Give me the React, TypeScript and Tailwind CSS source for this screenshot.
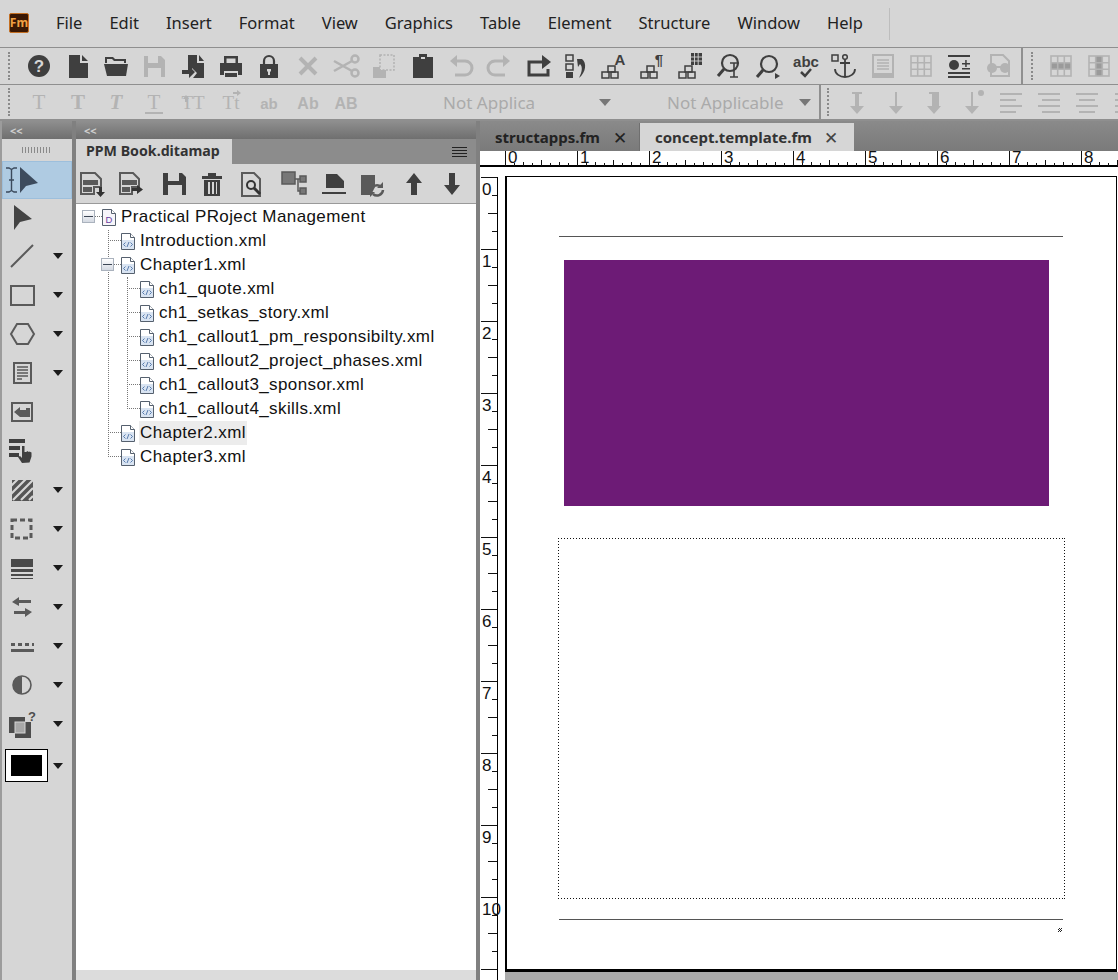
import React from 'react';

const DARK = '#3f3f3f';
const MID = '#5a5a5a';
const OFF = '#b3b3b3';
const UI = { fontFamily: '"Noto Sans", "Open Sans", sans-serif' };

const Ico: React.FC<{ children: React.ReactNode; c?: string; size?: number }> = ({ children, c = DARK, size = 28 }) => (
  <svg viewBox="0 0 28 28" width={size} height={size} fill={c} stroke="none" className="shrink-0">
    {children}
  </svg>
);

const Caret = () => (
  <svg viewBox="0 0 10 6" width={10} height={6} className="shrink-0">
    <path d="M0 0h10L5 6z" fill="#1a1a1a" />
  </svg>
);

const GrayCaret = () => (
  <svg viewBox="0 0 12 7" width={12} height={7} className="shrink-0">
    <path d="M0 0h12L6 7z" fill="#777" />
  </svg>
);

const Stacked = ({ children }: { children: React.ReactNode }) => (
  <Ico>
    <g fill="none" stroke={DARK} strokeWidth="1.500">
      <rect x="8" y="14" width="7" height="6" />
      <rect x="2" y="20" width="7" height="6" />
      <rect x="11" y="20" width="7" height="6" />
    </g>
    {children}
  </Ico>
);

const GridIcon = ({ c = OFF, fillRows = false, fillCol = false }: { c?: string; fillRows?: boolean; fillCol?: boolean }) => (
  <Ico c={c}>
    {fillRows && <rect x="4" y="10" width="20" height="8" fill="#9a9a9a" />}
    {fillCol && <rect x="11" y="4" width="7" height="20" fill="#9a9a9a" />}
    <g fill="none" stroke={c} strokeWidth="1.600">
      <rect x="4" y="4" width="20" height="20" />
      <path d="M10.700 4v20M17.300 4v20M4 10.700h20M4 17.300h20" />
    </g>
  </Ico>
);

const toolbarOne: React.ReactNode[] = [
  <Ico key="help">
    <circle cx="14" cy="14" r="11" />
    <text x="14" y="20" textAnchor="middle" fontSize="17" fontWeight="700" fill="#d6d6d6" fontFamily="Liberation Sans, sans-serif">?</text>
  </Ico>,
  <Ico key="new"><path d="M5 3h11v8h8v15H5zM18 3l6 6h-6z" /></Ico>,
  <Ico key="open">
    <path d="M3 11V5h8l2 2h11v4h-2V9H12l-2-2H5v4z" />
    <path d="M2 12h24l-2 12H5z" />
  </Ico>,
  <Ico key="save" c={OFF}>
    <path fillRule="evenodd" d="M4 4h17l4 4v17H4zM8 4v7h10V4zM8 16v9h13v-9z" />
  </Ico>,
  <Ico key="import">
    <path d="M9 3h9v8h7v15H14l4-5-5-5v3H9zM20 3l5 6h-5z" />
    <path d="M3 18h7v-4l6 6-6 6v-4H3z" />
  </Ico>,
  <Ico key="print">
    <path fillRule="evenodd" d="M7 4h14v7h4v12h-4v-4H7v4H3V11h4zM9.500 6.500V11h9V6.500z" />
    <rect x="8" y="21" width="12" height="4" />
  </Ico>,
  <Ico key="lock">
    <path d="M9 13V9a5 5 0 0 1 10 0v4" fill="none" stroke={DARK} strokeWidth="2.200" />
    <path fillRule="evenodd" d="M5 12h18v14H5zM12 17v2l1 1v3h2v-3l1-1v-2z" />
  </Ico>,
  <Ico key="cut" c={OFF}>
    <path d="M6 6l16 16M22 6L6 22" stroke={OFF} strokeWidth="4" fill="none" />
  </Ico>,
  <Ico key="scissors" c={OFF}>
    <g fill="none" stroke={OFF} strokeWidth="2.500">
      <circle cx="23" cy="7" r="3.500" />
      <circle cx="23" cy="21" r="3.500" />
      <path d="M20 9L2 19M20 19L2 9" />
    </g>
  </Ico>,
  <Ico key="copy" c={OFF}>
    <rect x="10" y="3" width="14" height="15" fill="none" stroke={OFF} strokeWidth="1.500" strokeDasharray="2 1.500" />
    <path d="M3 15h7v8h6v3H3z" />
    <rect x="10" y="18" width="6" height="5" />
  </Ico>,
  <Ico key="paste">
    <path d="M4 5h6V2h8v3h6v21H4z" />
    <rect x="12" y="5" width="4" height="2" fill="#d6d6d6" />
  </Ico>,
  <Ico key="undo" c={OFF}>
    <path d="M9 9h9a5.500 5.500 0 0 1 0 14H8" fill="none" stroke={OFF} strokeWidth="3" />
    <path d="M10 3v12L3 9z" />
  </Ico>,
  <Ico key="redo" c={OFF}>
    <path d="M19 9h-9a5.500 5.500 0 0 0 0 14h10" fill="none" stroke={OFF} strokeWidth="3" />
    <path d="M18 3v12l7-6z" />
  </Ico>,
  <Ico key="share">
    <path d="M20 10H5v13h19v-6" fill="none" stroke={DARK} strokeWidth="3" />
    <path d="M18 3l9 7-9 7z" />
  </Ico>,
  <Ico key="list">
    <rect x="4" y="3" width="7" height="6" fill="none" stroke={DARK} strokeWidth="1.500" />
    <rect x="4" y="12" width="7" height="6" fill="none" stroke={DARK} strokeWidth="1.500" />
    <rect x="4" y="20" width="7" height="6" />
    <path d="M15 7h5c5 4 4 13-3 19 3-6 4-11 1-14l-2 3z" />
  </Ico>,
  <Stacked key="a">
    <text x="20" y="13" textAnchor="middle" fontSize="15" fontWeight="700" fill={DARK} fontFamily="Liberation Sans, sans-serif">A</text>
  </Stacked>,
  <Stacked key="pilcrow">
    <text x="20" y="13" textAnchor="middle" fontSize="15" fontWeight="700" fill={DARK} fontFamily="Liberation Sans, sans-serif">¶</text>
  </Stacked>,
  <Stacked key="grid">
    <path d="M14 1h11v12H14z" />
    <path d="M17.500 1v12M21.200 1v12M14 5h11M14 9h11" stroke="#d6d6d6" strokeWidth="0.900" />
  </Stacked>,
  <Ico key="findg">
    <circle cx="15" cy="11" r="8" fill="none" stroke={DARK} strokeWidth="2.200" />
    <path d="M15 11h8M19 11v14M15 25h8" fill="none" stroke={DARK} strokeWidth="1.600" />
    <path d="M9 17l-6 7" stroke={DARK} strokeWidth="3" />
  </Ico>,
  <Ico key="find">
    <circle cx="15" cy="12" r="8" fill="none" stroke={DARK} strokeWidth="2.200" />
    <path d="M9 18l-6 7" stroke={DARK} strokeWidth="3" />
    <path d="M21 21l5 3-5 3z" />
  </Ico>,
  <Ico key="spell">
    <text x="14" y="15" textAnchor="middle" fontSize="15" fontWeight="700" fill={DARK} fontFamily="Liberation Sans, sans-serif">abc</text>
    <path d="M9 20l4 4 6-7" fill="none" stroke={DARK} strokeWidth="2.500" />
  </Ico>,
  <Ico key="anchor">
    <rect x="2" y="3" width="6" height="6" fill="none" stroke={DARK} strokeWidth="1.500" />
    <circle cx="15" cy="5" r="2.300" fill="none" stroke={DARK} strokeWidth="1.500" />
    <path d="M15 7v18M10 11h10M5 17c0 5 5 8 10 8s10-3 10-8" fill="none" stroke={DARK} strokeWidth="1.800" />
  </Ico>,
  <Ico key="page" c={OFF}>
    <rect x="4" y="3" width="20" height="19" fill="none" stroke={OFF} strokeWidth="2" />
    <path d="M8 8h12M8 11h12M8 14h12M8 17h12" stroke={OFF} strokeWidth="1.500" />
    <rect x="3" y="23" width="22" height="3" />
  </Ico>,
  <GridIcon key="table" />,
  <Ico key="bullet">
    <path d="M3 3h22v2H3z" />
    <circle cx="9" cy="13" r="5" />
    <path d="M17 11h8v1.500h-8zM20.200 8h1.500v7h-1.500zM17 16h8v1.500h-8zM3 20h22v2H3zM3 24h22v2H3z" />
  </Ico>,
  <Ico key="glasses" c={OFF}>
    <path d="M7 3h12l6 6v15H7z" fill="none" stroke={OFF} strokeWidth="2" />
    <circle cx="8" cy="16" r="5" />
    <circle cx="21" cy="16" r="5" />
    <rect x="10" y="14" width="8" height="2" />
  </Ico>,
];

const FmtText = ({ children, serif = true, bold = false, italic = false, size = 21 }: { children: React.ReactNode; serif?: boolean; bold?: boolean; italic?: boolean; size?: number }) => (
  <text
    x="14"
    y="21"
    textAnchor="middle"
    fontSize={size}
    fontWeight={bold ? 700 : 400}
    fontStyle={italic ? 'italic' : 'normal'}
    fill={OFF}
    fontFamily={serif ? 'Liberation Serif, serif' : 'Liberation Sans, sans-serif'}
  >
    {children}
  </text>
);

const toolbarTwo: React.ReactNode[] = [
  <Ico key="t1"><FmtText>T</FmtText></Ico>,
  <Ico key="t2"><FmtText bold>T</FmtText></Ico>,
  <Ico key="t3"><FmtText italic bold>T</FmtText></Ico>,
  <Ico key="t4"><FmtText>T</FmtText><rect x="5" y="24" width="18" height="2" fill={OFF} /></Ico>,
  <Ico key="t5">
    <FmtText size={19}>TT</FmtText>
    <path d="M7 7l-3 4h2v3h2v-3h2z" fill={OFF} />
  </Ico>,
  <Ico key="t6">
    <FmtText size={19}>Tt</FmtText>
    <path d="M20 2l4 3-4 3zM16 4h5v2h-5z" fill={OFF} />
  </Ico>,
  <Ico key="t7"><FmtText serif={false} bold size={15}>ab</FmtText></Ico>,
  <Ico key="t8"><FmtText serif={false} bold size={16}>Ab</FmtText></Ico>,
  <Ico key="t9"><FmtText serif={false} bold size={16}>AB</FmtText></Ico>,
];

const spacingIcons: React.ReactNode[] = [
  <Ico key="d1" c={OFF}><path d="M9 4h10v2h-3v12h5l-7 8-7-8h5V6H9z" /></Ico>,
  <Ico key="d2" c={OFF}><path d="M13 4h2v14h6l-7 8-7-8h6z" /></Ico>,
  <Ico key="d3" c={OFF}><path d="M9 4h10v14h2l-7 8-7-8h5V6H9z" /></Ico>,
  <Ico key="d4" c={OFF}><circle cx="23" cy="5" r="3" /><path d="M13 4h2v14h6l-7 8-7-8h6z" /></Ico>,
  <Ico key="a1" c={OFF}><path d="M3 5h22v2H3zM3 11h16v2H3zM3 17h22v2H3zM3 23h16v2H3z" /></Ico>,
  <Ico key="a2" c={OFF}><path d="M3 5h22v2H3zM7 11h18v2H7zM3 17h22v2H3zM7 23h18v2H7z" /></Ico>,
  <Ico key="a3" c={OFF}><path d="M3 5h22v2H3zM6 11h16v2H6zM3 17h22v2H3zM6 23h16v2H6z" /></Ico>,
  <Ico key="a4" c={OFF}><path d="M3 5h22v2H3zM3 11h22v2H3zM3 17h22v2H3zM3 23h22v2H3z" /></Ico>,
];

const tools: { icon: React.ReactNode; caret?: boolean; active?: boolean }[] = [
  {
    active: true,
    icon: (
      <svg viewBox="0 0 36 28" width={36} height={28} className="ml-[-5px] shrink-0">
        <path d="M3 2h3l2.500 1.500L11 2h3M3 26h3l2.500-1.500L11 26h3M8.500 3v21M6 14h5" fill="none" stroke="#3b4a5c" strokeWidth="1.400" />
        <path d="M17 1v26l6-7 12-3z" fill="#3d4b5d" />
      </svg>
    ),
  },
  { icon: <Ico><path d="M6 1v25l6-8 12-3z" fill="#444" /></Ico> },
  { caret: true, icon: <Ico><path d="M3 25L25 3" stroke={MID} strokeWidth="2" /></Ico> },
  { caret: true, icon: <Ico><rect x="3" y="5" width="23" height="19" fill="none" stroke={MID} strokeWidth="2" /></Ico> },
  { caret: true, icon: <Ico><path d="M9 4h11l6 10-6 10H9L3 14z" fill="none" stroke={MID} strokeWidth="2" /></Ico> },
  {
    caret: true,
    icon: (
      <Ico>
        <rect x="6" y="4" width="17" height="20" fill="none" stroke={MID} strokeWidth="2" />
        <path d="M9 8h11M9 11h11M9 14h11M9 17h11M9 20h5" stroke={MID} strokeWidth="1.300" />
      </Ico>
    ),
  },
  {
    icon: (
      <Ico>
        <rect x="4" y="5" width="20" height="18" fill="none" stroke={MID} strokeWidth="2" />
        <path d="M6 14l6-5v3h6v-2h4v9H12z" fill={MID} />
      </Ico>
    ),
  },
  {
    icon: (
      <svg viewBox="0 0 26 26" width={26} height={26} className="ml-[1px] shrink-0">
        <path d="M0 1h16v4H0zM0 8h11v4H0zM0 15h10v4H0z" fill="#3f3f3f" />
        <path d="M13 25l-4-6 2-1 2 2V8h2.500v6l2 0 .5-1 2 1 .5-.5 2 1v4l-2 6z" fill="#3f3f3f" />
      </svg>
    ),
  },
  {
    caret: true,
    icon: (
      <Ico>
        <rect x="4" y="4" width="21" height="21" fill="#555" />
        <path d="M2 11L11 2M2 19L19 2M5 24L25 4M13 24L25 12M21 24l4-4" stroke="#d6d6d6" strokeWidth="2.200" />
      </Ico>
    ),
  },
  {
    caret: true,
    icon: <Ico><rect x="4" y="5" width="19" height="18" fill="none" stroke={MID} strokeWidth="3" strokeDasharray="5 3" /></Ico>,
  },
  {
    caret: true,
    icon: <Ico><path d="M3 5h22v8H3zM3 15h22v3H3zM3 20h22v2H3zM3 24h22v1H3z" fill="#4a4a4a" /></Ico>,
  },
  {
    caret: true,
    icon: (
      <Ico>
        <path d="M4 9l7-5v3h12v3H11v3zM24 19l-7 5v-3H6v-3h11v-3z" fill={MID} />
      </Ico>
    ),
  },
  {
    caret: true,
    icon: <Ico><path d="M3 11h4v3H3zM10 11h4v3h-4zM17 11h4v3h-4zM24 11h2v3h-2zM3 17h23v3H3z" fill={MID} /></Ico>,
  },
  {
    caret: true,
    icon: (
      <Ico>
        <circle cx="14" cy="14" r="9" fill="none" stroke={MID} strokeWidth="1.600" />
        <path d="M14 5a9 9 0 0 0 0 18z" fill={MID} />
      </Ico>
    ),
  },
  {
    caret: true,
    icon: (
      <Ico>
        <rect x="1" y="7" width="16" height="16" fill="#4d4d4d" />
        <rect x="7" y="12" width="16" height="16" fill="#4d4d4d" />
        <rect x="7" y="12" width="10" height="11" fill="#a8a8a8" stroke="#d6d6d6" />
        <text x="24" y="11" textAnchor="middle" fontSize="13" fontWeight="700" fill="#4d4d4d" fontFamily="Liberation Sans, sans-serif">?</text>
      </Ico>
    ),
  },
];

const panelIcons: { cls: string; icon: React.ReactNode }[] = [
  {
    cls: 'ml-[2px]',
    icon: (
      <Ico c={MID}>
        <path d="M3 3h14l6 6v8h-7v7H3z" fill="none" stroke={MID} strokeWidth="2" />
        <path d="M5 10h15v5H5zM5 17h9v5H5z" />
        <path d="M21 17h3v5h3l-4.500 5-4.500-5h3z" fill="#333" />
      </Ico>
    ),
  },
  {
    cls: 'ml-[10px]',
    icon: (
      <Ico c={MID}>
        <path d="M4 3h13l6 6v8h-7v7H4z" fill="none" stroke={MID} strokeWidth="2" />
        <path d="M6 10h15v5H6zM6 17h8v5H6z" />
        <path d="M16 18h5v-3l6 4.500-6 4.500v-3h-5z" fill="#333" />
      </Ico>
    ),
  },
  {
    cls: 'ml-[16px]',
    icon: <Ico><path fillRule="evenodd" d="M3 3h19l4 4v18H3zM8 3v8h11V3zM8 15v10h14V15z" /></Ico>,
  },
  {
    cls: 'ml-[10px]',
    icon: (
      <Ico>
        <path d="M10 3h8v3h6v3H4V6h6z" />
        <path fillRule="evenodd" d="M6 10h16v16H6zM10 12v12h2V12zM14 12v12h2V12zM18 12v12h1V12z" />
      </Ico>
    ),
  },
  {
    cls: 'ml-[11px]',
    icon: (
      <Ico c={MID}>
        <path d="M5 3h12l6 6v17H5z" fill="none" stroke={MID} strokeWidth="2" />
        <circle cx="14" cy="15" r="4" fill="none" stroke="#333" strokeWidth="2" />
        <path d="M17 18l6 6" stroke="#333" strokeWidth="3" />
      </Ico>
    ),
  },
  {
    cls: 'ml-[15px]',
    icon: (
      <Ico c={MID}>
        <rect x="2" y="2" width="13" height="12" fill="#777" stroke={MID} strokeWidth="1.500" />
        <rect x="20" y="6" width="6" height="6" fill="#777" stroke={MID} strokeWidth="1.500" />
        <rect x="20" y="18" width="6" height="6" fill="#777" stroke={MID} strokeWidth="1.500" />
        <path d="M15 9h5M18 9v12h2" fill="none" stroke={MID} strokeWidth="1.500" />
      </Ico>
    ),
  },
  {
    cls: 'ml-[11px]',
    icon: <Ico><path d="M7 4h11l7 7v7H7zM3 22h24v2H3z" /></Ico>,
  },
  {
    cls: 'ml-[10px]',
    icon: (
      <Ico c={MID}>
        <path d="M4 5h14v12l-4 8H4z" />
        <path d="M14 20a6 6 0 0 1 10-3M26 20a6 6 0 0 1-10 4" fill="none" stroke={MID} strokeWidth="2.500" />
        <path d="M26 12v6h-6zM13 27v-5h5z" />
      </Ico>
    ),
  },
  { cls: 'ml-[15px]', icon: <Ico><path d="M14 3l8 10h-5v12h-6V13H6z" /></Ico> },
  { cls: 'ml-[10px]', icon: <Ico><path d="M14 25l8-10h-5V3h-6v12H6z" /></Ico> },
];

const Grip = () => <div className="h-[28px] w-0 shrink-0 border-l-2 border-dotted border-[#8a8a8a]" />;

const Cell = ({ children }: { children: React.ReactNode }) => (
  <div className="flex w-[38.350px] shrink-0 justify-center">{children}</div>
);

const MENU = ['File', 'Edit', 'Insert', 'Format', 'View', 'Graphics', 'Table', 'Element', 'Structure', 'Window', 'Help'];

const FileIcon = ({ root = false }: { root?: boolean }) => (
  <svg viewBox="0 0 14 17" width={14} height={17} className="shrink-0">
    <path d="M.5.5h9l4 4v12H.5z" fill={root ? '#f7f5fa' : '#fff'} stroke="#55606e" />
    <path d="M9.500.5v4h4" fill="#fff" stroke="#55606e" />
    {root ? (
      <text x="7" y="14" textAnchor="middle" fontSize="9.500" fill="#6b3fa0" fontFamily="Liberation Sans, sans-serif">D</text>
    ) : (
      <>
        <rect x="1" y="7" width="12" height="9" fill="#d9e4f2" />
        <path d="M4.500 9.500L2.500 11.500l2 2M9.500 9.500l2 2-2 2M8 9l-2 5" fill="none" stroke="#4a6fa5" strokeWidth="0.900" />
      </>
    )}
  </svg>
);

const Expander = () => (
  <span className="flex h-[13px] w-[13px] items-center justify-center border border-[#aab2bd] bg-gradient-to-b from-white to-[#d4d9e2]">
    <span className="h-px w-[9px] bg-[#3c4654]" />
  </span>
);

const TREE: { label: string; level: 0 | 1 | 2; open?: boolean; hover?: boolean }[] = [
  { label: 'Practical PRoject Management', level: 0, open: true },
  { label: 'Introduction.xml', level: 1 },
  { label: 'Chapter1.xml', level: 1, open: true },
  { label: 'ch1_quote.xml', level: 2 },
  { label: 'ch1_setkas_story.xml', level: 2 },
  { label: 'ch1_callout1_pm_responsibilty.xml', level: 2 },
  { label: 'ch1_callout2_project_phases.xml', level: 2 },
  { label: 'ch1_callout3_sponsor.xml', level: 2 },
  { label: 'ch1_callout4_skills.xml', level: 2 },
  { label: 'Chapter2.xml', level: 1, hover: true },
  { label: 'Chapter3.xml', level: 1 },
];

const TreeRow = ({ label, level, open, hover }: (typeof TREE)[number]) => {
  const iconLeft = level === 0 ? 'pl-[26px]' : level === 1 ? 'pl-[45px]' : 'pl-[64px]';
  return (
    <div className={`relative flex h-6 items-center gap-[4px] ${iconLeft}`}>
      {level === 1 && <span className="absolute left-[32px] top-[11px] w-[13px] border-t border-dotted border-[#777]" />}
      {level === 2 && <span className="absolute left-[51px] top-[11px] w-[13px] border-t border-dotted border-[#777]" />}
      {open && level === 0 && <span className="absolute left-[6px] top-[5px]"><Expander /></span>}
      {open && level === 1 && <span className="absolute left-[25px] top-[5px] bg-white"><Expander /></span>}
      {open && level === 0 && <span className="absolute left-[19px] top-[11px] w-[7px] border-t border-dotted border-[#777]" />}
      {open && level === 1 && <span className="absolute left-[38px] top-[11px] w-[7px] border-t border-dotted border-[#777]" />}
      <FileIcon root={level === 0} />
      <span className={`whitespace-nowrap px-[1px] text-[17px] leading-6 tracking-[0.4px] text-[#111] ${hover ? 'bg-[#ececec]' : ''}`}>{label}</span>
    </div>
  );
};

const HTicks = () => (
  <svg viewBox="0 0 72 15" width={72} height={15} className="absolute left-0 top-0">
    <path d="M.5 0v15M9.500 12v3M18.500 11v4M27.500 12v3M36.500 9v6M45.500 12v3M54.500 11v4M63.500 12v3" stroke="#111" />
  </svg>
);

const VTicks = () => (
  <svg viewBox="0 0 16 72" width={16} height={72} className="absolute left-0 top-0">
    <path d="M0 .5h16M11 18.500h5M7 36.500h9M11 54.500h5" stroke="#111" />
  </svg>
);

export default function App() {
  return (
    <div className="flex h-[980px] w-[1118px] flex-col overflow-hidden bg-[#d6d6d6] text-[#222]" style={UI}>
      {/* menu bar */}
      <div className="flex h-[47px] shrink-0 items-center pl-[9px]">
        <div className="mb-[2px] flex h-[20px] w-[20px] items-center justify-center rounded-[2px] border border-[#c46f22] bg-[#3a1804] text-[12px] font-bold leading-none text-[#f0a043]">
          Fm
        </div>
        <div className="ml-[27px] flex gap-[27px] text-[16.500px] leading-none text-[#222]">
          {MENU.map(m => (
            <span key={m}>{m}</span>
          ))}
        </div>
        <div className="ml-[26px] h-[32px] w-px bg-[#bdbdbd]" />
      </div>

      {/* toolbar row 1 */}
      <div className="flex h-[38px] shrink-0 items-center overflow-hidden border-y border-[#8f8f8f] pl-2">
        <Grip />
        <div className="ml-[10px] flex shrink-0">
          {toolbarOne.map((icon, i) => (
            <Cell key={i}>{icon}</Cell>
          ))}
        </div>
        <div className="ml-[4px] h-full w-[2px] shrink-0 bg-[#8f8f8f]" />
        <div className="ml-[8px] shrink-0"><Grip /></div>
        <div className="ml-[9px] flex shrink-0">
          <Cell><GridIcon fillRows /></Cell>
          <Cell><GridIcon fillCol /></Cell>
        </div>
      </div>

      {/* toolbar row 2 */}
      <div className="flex h-[36px] shrink-0 items-center overflow-hidden border-b-2 border-[#8f8f8f] pl-2">
        <Grip />
        <div className="ml-[10px] flex shrink-0">
          {toolbarTwo.map((icon, i) => (
            <Cell key={i}>{icon}</Cell>
          ))}
        </div>
        <div className="ml-[78px] flex w-[168px] shrink-0 items-center justify-between whitespace-nowrap text-[17px] leading-none text-[#aaa]">
          <span>Not Applica</span>
          <GrayCaret />
        </div>
        <div className="ml-[56px] flex w-[144px] shrink-0 items-center justify-between whitespace-nowrap text-[17px] leading-none text-[#aaa]">
          <span>Not Applicable</span>
          <GrayCaret />
        </div>
        <div className="ml-[8px] h-full w-[2px] shrink-0 bg-[#8f8f8f]" />
        <div className="ml-[6px] shrink-0"><Grip /></div>
        <div className="ml-[9px] flex shrink-0">
          {spacingIcons.map((icon, i) => (
            <Cell key={i}>{icon}</Cell>
          ))}
        </div>
      </div>

      <div className="flex min-h-0 flex-1">
        {/* tool panel */}
        <div className="flex w-[72px] shrink-0 flex-col border-l-2 border-[#9c9c9c]">
          <div className="flex h-[18px] shrink-0 items-center bg-gradient-to-b from-[#8f8f8f] to-[#6f6f6f] pl-[8px] text-[11px] font-bold leading-none text-[#cfcfcf]">
            &lt;&lt;
          </div>
          <div className="flex h-[22px] shrink-0 items-center justify-center pr-[2px]">
            <div className="h-[6px] w-[28px] bg-[repeating-linear-gradient(90deg,#8a8a8a_0,#8a8a8a_1px,transparent_1px,transparent_3px)]" />
          </div>
          {tools.map((t, i) => (
            <div key={i} className={`flex shrink-0 items-center pl-[6px] ${i < 3 ? 'h-[38px]' : 'h-[39px]'} ${t.active ? 'bg-[#afcbe2] outline outline-1 -outline-offset-1 outline-[#9dbfdc]' : ''}`}>
              {t.icon}
              {t.caret && <span className="ml-[17px]"><Caret /></span>}
            </div>
          ))}
          <div className="ml-[3px] mt-[6px] flex h-[33px] items-center">
            <div className="flex h-[33px] w-[43px] items-center justify-center border border-black bg-white">
              <div className="h-[21px] w-[31px] bg-black" />
            </div>
            <span className="ml-[5px]"><Caret /></span>
          </div>
        </div>

        {/* structure panel */}
        <div className="flex w-[408px] shrink-0 flex-col border-x-4 border-[#808080]">
          <div className="flex h-[18px] shrink-0 items-center bg-gradient-to-b from-[#8f8f8f] to-[#6f6f6f] pl-[8px] text-[11px] font-bold leading-none text-[#cfcfcf]">
            &lt;&lt;
          </div>
          <div className="flex h-[25px] shrink-0 items-stretch bg-[#8c8c8c]">
            <div className="flex w-[156px] items-center bg-[#d6d6d6] pl-[10px] text-[14.200px] font-bold leading-none text-[#333]">
              PPM Book.ditamap
            </div>
            <div className="ml-auto flex items-center pr-[9px]">
              <div className="flex w-[15px] flex-col gap-[2px]">
                <span className="h-px bg-[#222]" />
                <span className="h-px bg-[#222]" />
                <span className="h-px bg-[#222]" />
                <span className="h-px bg-[#222]" />
              </div>
            </div>
          </div>
          <div className="flex h-[39px] shrink-0 items-center">
            {panelIcons.map((p, i) => (
              <div key={i} className={`shrink-0 ${p.cls}`}>{p.icon}</div>
            ))}
          </div>
          <div className="relative min-h-0 flex-1 border-t border-[#9a9a9a] bg-white pt-[1px]" style={{ fontFamily: '"Liberation Sans", sans-serif' }}>
            <span className="absolute left-[32px] top-[26px] h-[227px] border-l border-dotted border-[#777]" />
            <span className="absolute left-[51px] top-[73px] h-[132px] border-l border-dotted border-[#777]" />
            {TREE.map(row => (
              <TreeRow key={row.label} {...row} />
            ))}
          </div>
          <div className="h-[10px] shrink-0 bg-[#dcdcdc]" />
        </div>

        {/* document */}
        <div className="flex min-w-0 flex-1 flex-col bg-white">
          <div className="flex h-[30px] shrink-0 items-end bg-gradient-to-b from-[#8a8a8a] to-[#7a7a7a]">
            <div className="flex h-[28px] w-[160px] items-center border-r border-[#6f6f6f] pl-[15px] text-[15px] font-bold leading-none text-[#222]">
              <span>structapps.fm</span>
              <span className="ml-[13px] text-[17px] font-normal text-[#222]">✕</span>
            </div>
            <div className="flex h-[28px] w-[214px] items-center bg-[#d6d6d6] pl-[15px] text-[15px] font-bold leading-none text-[#333]">
              <span>concept.template.fm</span>
              <span className="ml-[12px] text-[17px] font-normal text-[#444]">✕</span>
            </div>
          </div>
          <div className="flex h-[16px] shrink-0 border-b-2 border-black pl-[25px]" style={{ fontFamily: '"Liberation Sans", sans-serif' }}>
            {[0, 1, 2, 3, 4, 5, 6, 7, 8].map(n => (
              <div key={n} className="relative h-full w-[72px] shrink-0">
                <HTicks />
                <span className="absolute left-[3px] top-[-1px] text-[17px] leading-[16px] text-[#111]">{n}</span>
              </div>
            ))}
          </div>
          <div className="flex min-h-0 flex-1 bg-white" style={{ fontFamily: '"Liberation Sans", sans-serif' }}>
            <div className="ml-[1px] mt-[10px] box-content flex h-[803px] w-[16px] shrink-0 flex-col border-r border-black">
              {[0, 1, 2, 3, 4, 5, 6, 7, 8, 9, 10, 11].map(n => (
                <div key={n} className="relative h-[72px] w-[16px] shrink-0">
                  <VTicks />
                  {n < 11 && <span className="absolute left-[1px] top-[4px] text-[17px] leading-[18px] text-[#111]">{n}</span>}
                </div>
              ))}
            </div>
            <div className="ml-[7px] flex min-w-0 flex-1 flex-col pt-[9px]">
              <div className="flex h-[796px] w-[612px] shrink-0 flex-col border-b-[3px] border-l-2 border-r border-t border-black bg-white pl-[52px]">
                <div className="mt-[59px] h-px w-[504px] bg-[#555]" />
                <div className="ml-[5px] mt-[23px] h-[246px] w-[485px] bg-[#6d1b76]" />
                <div className="ml-[-1px] mt-[32px] h-[361px] w-[507px] bg-no-repeat [background-image:repeating-linear-gradient(90deg,#111_0_1px,transparent_1px_3px),repeating-linear-gradient(90deg,#111_0_1px,transparent_1px_3px),repeating-linear-gradient(0deg,#111_0_1px,transparent_1px_3px),repeating-linear-gradient(0deg,#111_0_1px,transparent_1px_3px)] [background-position:0_0,0_100%,0_0,100%_0] [background-size:100%_1px,100%_1px,1px_100%,1px_100%]" />
                <div className="mt-[20px] h-px w-[504px] bg-[#555]" />
                <div className="ml-[499px] mt-[8px] h-[4px] w-[4px] bg-[repeating-conic-gradient(#222_0_25%,#fff_0_50%)] bg-[length:2px_2px]" />
              </div>
              <div className="flex-1 bg-[#aaa]" />
            </div>
          </div>
        </div>
      </div>
    </div>
  );
}
